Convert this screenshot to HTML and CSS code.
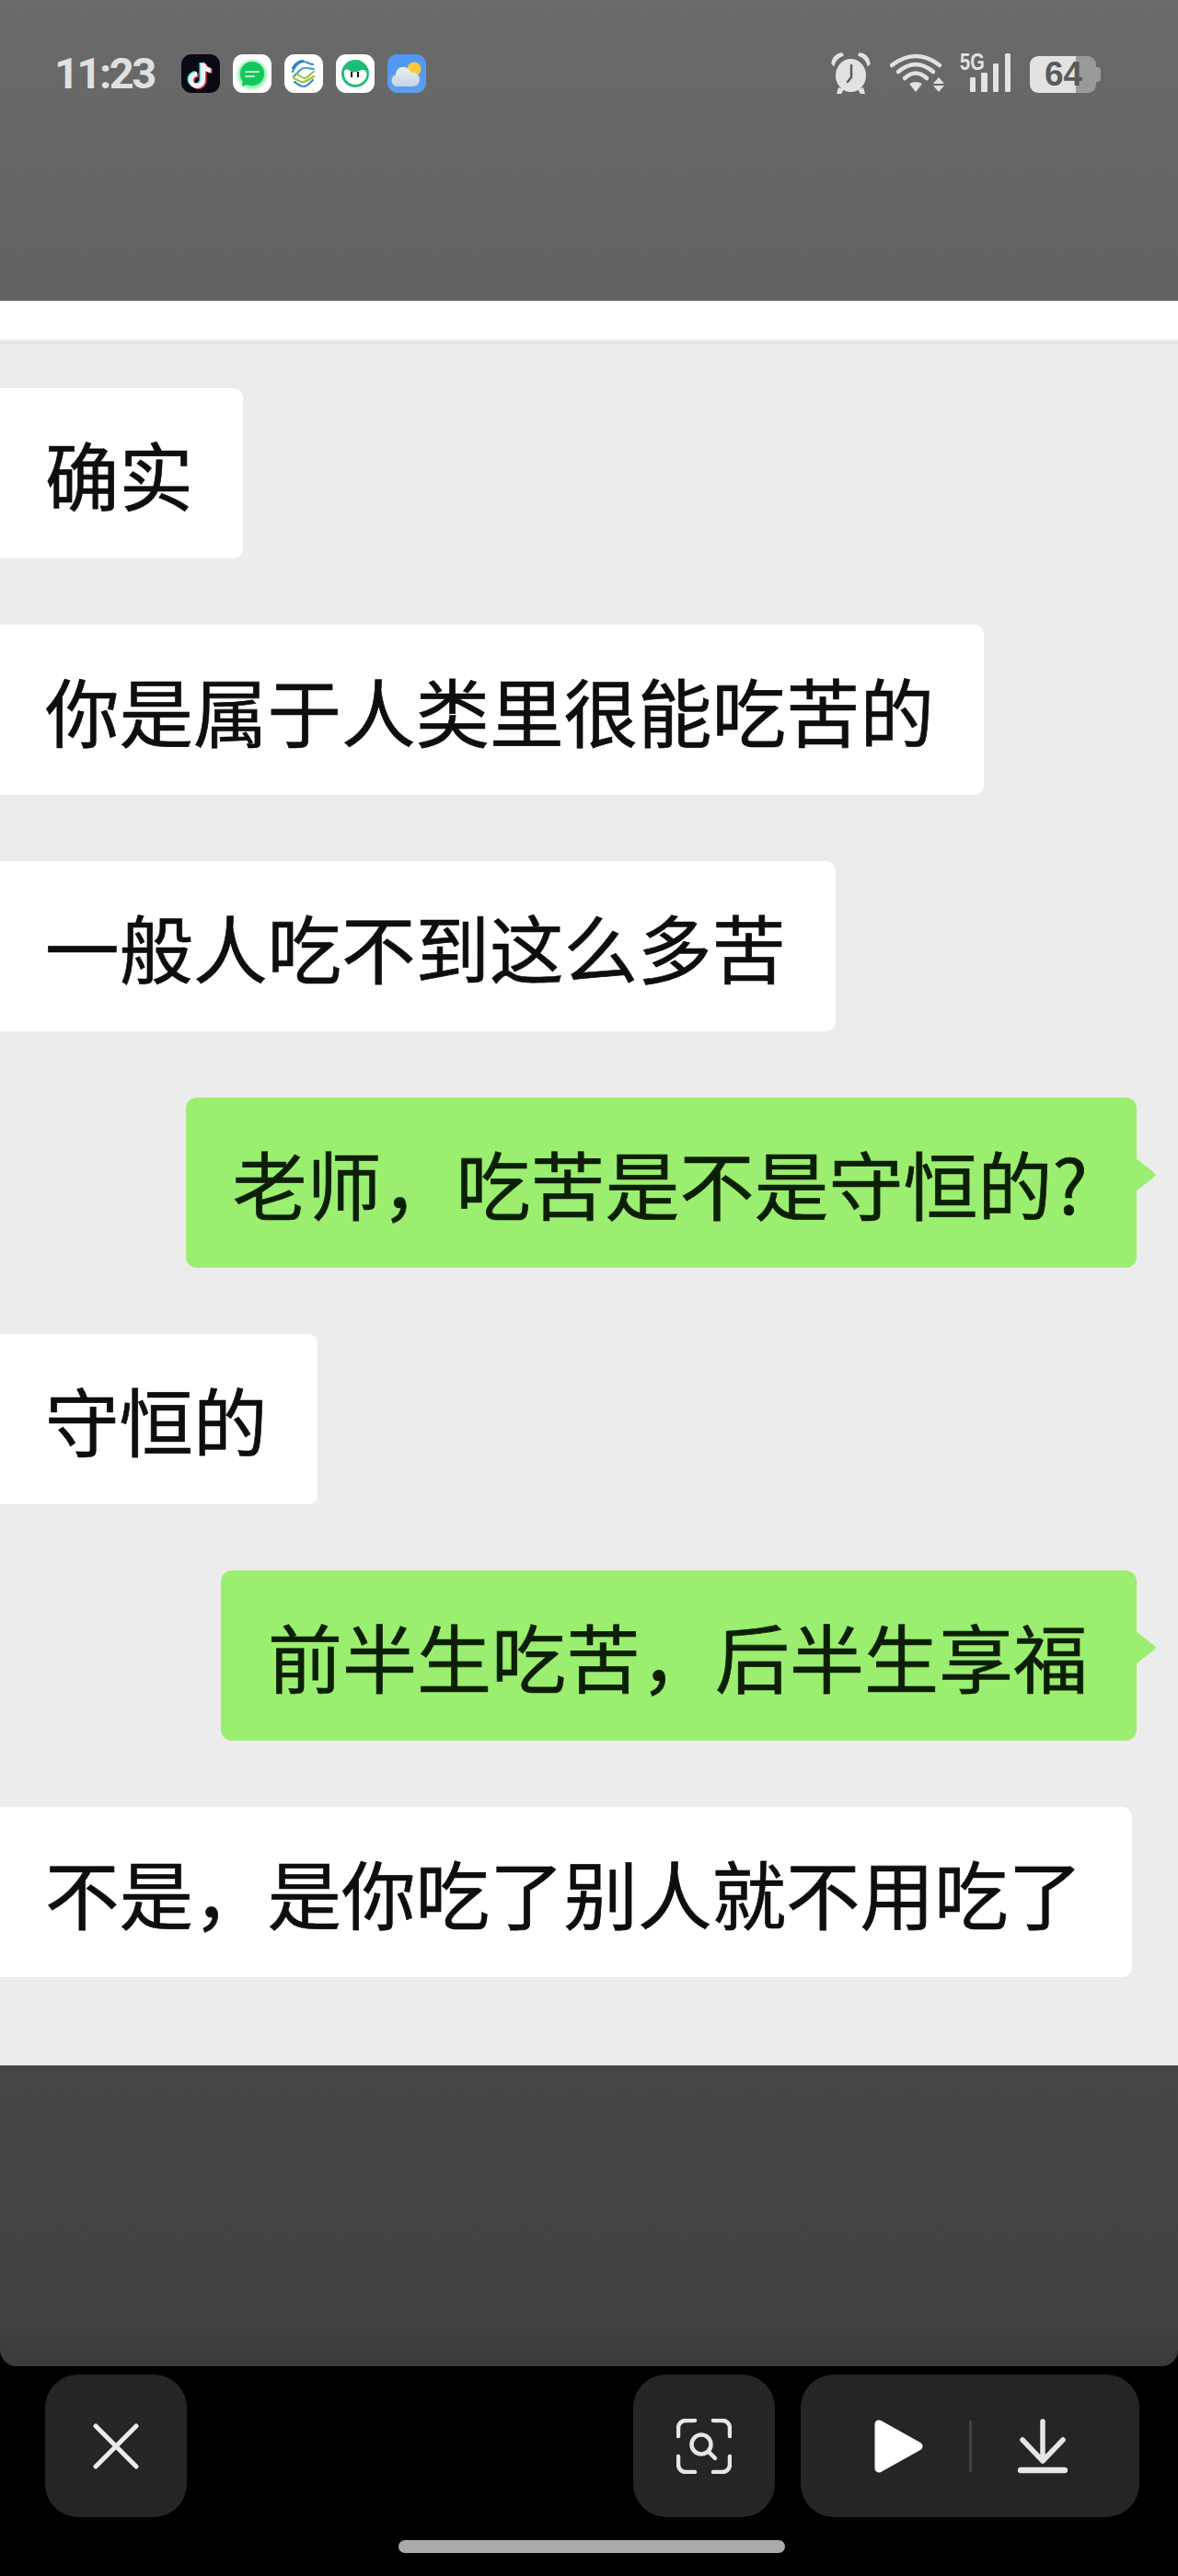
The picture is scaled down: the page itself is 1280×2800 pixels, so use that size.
FILE: index.html
```html
<!DOCTYPE html>
<html lang="zh-CN">
<head>
    <meta charset="UTF-8">
    <meta name="viewport" content="width=device-width, initial-scale=1.0">
    <title>聊天截图</title>
    <link rel="stylesheet" href="styles.css">
</head>
<body>

<!-- Status bar -->
<div class="status-bar">
    <div class="status-left">
        <span class="time">11:23</span>
        <div class="app-icons">
            <svg class="app-icon" viewBox="0 0 42 42">
                <rect width="42" height="42" rx="11" fill="#0a0a14"/>
                <g fill="none" stroke-width="5">
                    <path d="M22 9v18a6.5 6.5 0 1 1-6.5-6.5M22 9c1 4 4 7 8.500 7.500" stroke="#4fe3e8"/>
                    <path d="M25 11v18a6.500 6.500 0 1 1-6.500-6.500M25 11c1 4 4 7 8.500 7.500" stroke="#f0486a"/>
                    <path d="M23.500 10v18a6.500 6.500 0 1 1-6.500-6.500M23.500 10c1 4 4 7 8.500 7.500" stroke="#f6f2f2"/>
                </g>
            </svg>
            <svg class="app-icon" viewBox="0 0 42 42">
                <defs>
                    <radialGradient id="glow">
                        <stop offset="70%" stop-color="#7ff0a4"/>
                        <stop offset="100%" stop-color="#ffffff"/>
                    </radialGradient>
                </defs>
                <rect width="42" height="42" rx="11" fill="#fff"/>
                <circle cx="21" cy="22" r="18" fill="url(#glow)"/>
                <circle cx="21" cy="21" r="13" fill="#14c65a"/>
                <path d="M11 27l-1 8 8-3z" fill="#14c65a"/>
                <path d="M14 19h14M14 24h9" stroke="#b9f3cd" stroke-width="2" stroke-linecap="round"/>
            </svg>
            <svg class="app-icon" viewBox="0 0 42 42">
                <rect width="42" height="42" rx="11" fill="#fff"/>
                <g fill="none" stroke-width="2.200" stroke-linecap="round">
                    <path d="M9 19c2-6 7-11 12-11 4 0 6 3 10 3" stroke="#3a8fc4"/>
                    <path d="M9 15c3-5 7-8 11-8" stroke="#2c7bb0"/>
                    <path d="M10 24c4-2 6-8 11-9 4-1 7 1 11 1" stroke="#49a2c8"/>
                    <path d="M12 21c4 0 6 5 10 5 4 0 7-6 10-7" stroke="#9cc43c"/>
                    <path d="M10 26c4 1 7 5 11 4 4-1 7-3 11-6" stroke="#9cc43c"/>
                    <path d="M11 30c3 2 6 5 10 5 4 0 7-4 10-7" stroke="#3a8fc4"/>
                </g>
            </svg>
            <svg class="app-icon" viewBox="0 0 42 42">
                <rect width="42" height="42" rx="11" fill="#fff"/>
                <circle cx="21" cy="21" r="15" fill="#1dbd76"/>
                <path d="M9 19c0-3 3-3 5-2 2 2 5 3 9 2 4-2 7-3 9-1 2 2 2 5 0 9-3 4-7 6-11 6-5 0-9-3-11-7-1-2-1-5-1-7z" fill="#fff"/>
                <path d="M16 19h2v6h-2zM23 19h2v6h-2z" fill="#111"/>
            </svg>
            <svg class="app-icon" viewBox="0 0 42 42">
                <defs>
                    <linearGradient id="sky" x1="0" y1="0" x2="0" y2="1">
                        <stop offset="0%" stop-color="#4f97f6"/>
                        <stop offset="100%" stop-color="#5e9fea"/>
                    </linearGradient>
                    <linearGradient id="cloud" x1="0" y1="0" x2="0" y2="1">
                        <stop offset="0%" stop-color="#eef0ee"/>
                        <stop offset="100%" stop-color="#c3d3e6"/>
                    </linearGradient>
                </defs>
                <rect width="42" height="42" rx="11" fill="url(#sky)"/>
                <circle cx="29" cy="16" r="7.500" fill="#fcc63a"/>
                <path d="M11 35a6.500 6.500 0 0 1-2-12.700C9 16 14 13 19 14c4 1 6 4 7 6 4-1 9 2 9 7 0 5-3 8-8 8z" fill="url(#cloud)"/>
            </svg>
        </div>
    </div>
    <div class="status-right">
        <!-- alarm -->
        <svg class="icon-alarm" viewBox="0 0 43 45">
            <ellipse cx="21.500" cy="25" rx="16.500" ry="18" fill="#e2e2e2"/>
            <path d="M1 12C2 5 7 1 12 1l1 2C8 5 4 9 3 14zM42 12C41 5 36 1 31 1l-1 2c5 2 9 6 10 11z" fill="#e2e2e2" stroke="#e2e2e2" stroke-width="1.500"/>
            <path d="M8 38l-2 7h5l3-5zM35 38l2 7h-5l-3-5z" fill="#e2e2e2"/>
            <path d="M22 14v13l-4 5" fill="none" stroke="#5c5c5c" stroke-width="2.500" stroke-linecap="round" stroke-linejoin="round"/>
        </svg>
        <!-- wifi -->
        <svg class="icon-wifi" viewBox="0 0 60 44">
            <g fill="none" stroke="#e2e2e2" stroke-width="4.500" stroke-linecap="round">
                <path d="M2 14Q28-6 54 14"/>
                <path d="M9 21Q28 5 47 21"/>
                <path d="M16 28Q28 17 40 28"/>
            </g>
            <path d="M21 34Q28 30 35 34L28 43zM47 34l6-7 6 7zM47 36h12l-6 7z" fill="#e2e2e2"/>
        </svg>
        <!-- 5G and signal -->
        <div class="signal">
            <span class="signal-label">5G</span>
            <svg class="icon-signal" viewBox="0 0 55 44">
                <rect x="11" y="27" width="6" height="16" rx="1" fill="#e2e2e2"/>
                <rect x="23" y="22" width="7" height="21" rx="1" fill="#e2e2e2"/>
                <rect x="36" y="12" width="6" height="31" rx="1" fill="#e2e2e2"/>
                <rect x="49" y="1" width="6" height="42" rx="1.500" fill="#e2e2e2"/>
            </svg>
        </div>
        <div class="battery">64</div>
    </div>
</div>

<div class="top-strip"></div>

<!-- Chat -->
<div class="chat">
    <div class="bubble">确实</div>
    <div class="bubble">你是属于人类里很能吃苦的</div>
    <div class="bubble">一般人吃不到这么多苦</div>
    <div class="bubble mine">老师，吃苦是不是守恒的?</div>
    <div class="bubble">守恒的</div>
    <div class="bubble mine">前半生吃苦，后半生享福</div>
    <div class="bubble">不是，是你吃了别人就不用吃了</div>
</div>

<div class="dark-area"></div>

<!-- Bottom buttons -->
<div class="toolbar">
    <div class="tool-btn close-btn">
        <svg class="icon-close" viewBox="0 0 50 50">
            <path d="M3 3l44 44M47 3L3 47" fill="none" stroke="#ececec" stroke-width="5" stroke-linecap="round"/>
        </svg>
    </div>
    <div class="tool-btn">
        <svg class="icon-scan" viewBox="0 0 60 60">
            <g fill="none" stroke="#e6e6e6" stroke-width="4.500" stroke-linecap="round">
                <path d="M2 19V10a8 8 0 0 1 8-8h10M40 2h10a8 8 0 0 1 8 8v9M2 41v9a8 8 0 0 0 8 8h10M40 58h10a8 8 0 0 0 8-8v-9"/>
                <circle cx="27" cy="28" r="10.500"/>
                <path d="M35 36l7 7"/>
            </g>
        </svg>
    </div>
    <div class="tool-group">
        <svg class="icon-play" viewBox="0 0 53 58">
            <path d="M5 5L48 29 5 53z" fill="#fff" stroke="#fff" stroke-width="9" stroke-linejoin="round"/>
        </svg>
        <div class="divider"></div>
        <svg class="icon-download" viewBox="0 0 54 60">
            <path d="M27 3v43M5 23l22 23 22-23" fill="none" stroke="#e6e6e6" stroke-width="5.500" stroke-linecap="round" stroke-linejoin="round"/>
            <path d="M3 56h48" fill="none" stroke="#e6e6e6" stroke-width="6.500" stroke-linecap="round"/>
        </svg>
    </div>
</div>
<div class="home-bar"></div>

</body>
</html>
```

FILE: styles.css
```css
* {
    box-sizing: border-box;
}
body {
    margin: 0;
    height: 2800px;
    background-color: #000;
    font-family: "Noto Sans CJK SC", "Noto Sans", sans-serif;
    overflow: hidden;
}

/* Status bar */
.status-bar {
    display: flex;
    justify-content: space-between;
    align-items: flex-start;
    height: 327px;
    padding: 57px 84px 0 59px;
    background: linear-gradient(#6a6a6a, #626262);
}
.status-left {
    display: flex;
    align-items: center;
    padding-top: 2px;
}
.time {
    width: 138px;
    font-family: Roboto, sans-serif;
    font-size: 47px;
    font-weight: 700;
    line-height: 42px;
    letter-spacing: -2.5px;
    color: #e0e0e0;
}
.app-icons {
    display: flex;
    gap: 14px;
}
.app-icon {
    display: block;
    width: 42px;
    height: 42px;
}
.status-right {
    display: flex;
    align-items: flex-start;
}
.icon-alarm {
    width: 43px;
    height: 45px;
    margin-right: 21px;
}
.icon-wifi {
    width: 60px;
    height: 44px;
    margin-right: 16px;
}
.signal {
    position: relative;
    width: 55px;
    height: 44px;
    margin-right: 21px;
}
.icon-signal {
    display: block;
    width: 55px;
    height: 44px;
}
.signal-label {
    position: absolute;
    top: 0;
    left: 0;
    font-family: "Liberation Sans", sans-serif;
    font-size: 26px;
    font-weight: 700;
    line-height: 20px;
    color: #e2e2e2;
    transform: scaleX(0.77);
    transform-origin: left top;
}
.battery {
    position: relative;
    width: 72px;
    height: 40px;
    margin: 4px 5px 0 0;
    padding-left: 16px;
    border-radius: 9px;
    background: linear-gradient(to right, #e2e2e2 50px, #9a9a9a 50px);
    font-family: "Liberation Sans", sans-serif;
    font-size: 37px;
    font-weight: 700;
    line-height: 40px;
    color: #5a5a5a;
}
.battery::after {
    content: "";
    position: absolute;
    top: 12px;
    right: -5px;
    width: 5px;
    height: 16px;
    border-radius: 0 4px 4px 0;
    background-color: #9a9a9a;
}

.top-strip {
    height: 48px;
    background: linear-gradient(#fff 41px, #e2e2e2 45px, #ececec 48px);
}

/* Chat */
.chat {
    display: flex;
    flex-direction: column;
    align-items: flex-start;
    gap: 72px;
    height: 1870px;
    padding-top: 47px;
    background-color: #ececec;
}
.bubble {
    position: relative;
    height: 185px;
    padding: 0 54px 0 49px;
    border-radius: 0 10px 10px 0;
    background-color: #fff;
    font-size: 80.5px;
    line-height: 184px;
    color: #0e0e0e;
    -webkit-text-stroke: 0.7px #0e0e0e;
    white-space: nowrap;
}
.bubble.mine {
    align-self: flex-end;
    margin-right: 45px;
    padding: 0 53px 0 51px;
    border-radius: 12px;
    background-color: #9bee70;
    font-size: 81px;
    color: #0c1f06;
    -webkit-text-stroke: 0.7px #0c1f06;
}
.bubble.mine::after {
    content: "";
    position: absolute;
    top: 66px;
    right: -21px;
    width: 22px;
    height: 36px;
    background-color: #9bee70;
    clip-path: polygon(0 0, 85% 40%, 100% 50%, 85% 60%, 0 100%);
}

.dark-area {
    height: 327px;
    border-radius: 0 0 18px 18px;
    background: linear-gradient(#464646, #424242 85%, #3a3a3a);
}

/* Bottom buttons */
.toolbar {
    display: flex;
    gap: 28px;
    padding: 9px 42px 0 49px;
}
.tool-btn, .tool-group {
    display: flex;
    align-items: center;
    justify-content: center;
    height: 155px;
    border-radius: 36px;
    background-color: #252525;
}
.tool-btn {
    width: 154px;
}
.close-btn {
    margin-right: auto;
}
.tool-group {
    justify-content: flex-start;
    gap: 50px;
    width: 368px;
    padding-left: 80px;
}
.icon-close {
    width: 50px;
    height: 50px;
}
.icon-scan {
    width: 60px;
    height: 60px;
}
.icon-play {
    width: 53px;
    height: 58px;
}
.divider {
    width: 3px;
    height: 56px;
    background-color: #444;
}
.icon-download {
    width: 54px;
    height: 60px;
}
.home-bar {
    width: 420px;
    height: 14px;
    margin: 25px 0 0 433px;
    border-radius: 7px;
    background-color: #aaa;
}
```
